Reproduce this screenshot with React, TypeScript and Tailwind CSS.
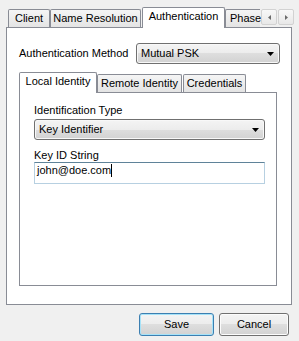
import React from 'react';

const font = "font-['Liberation_Sans',Arial,sans-serif]";

function Tab({ label, selected, className = '' }: { label: string; selected?: boolean; className?: string }) {
  if (selected) {
    return (
      <div
        className={`relative z-10 h-[21px] mb-[-1px] flex justify-center pt-[2px] bg-white border border-b-0 border-[#898c95] rounded-t-[2px] whitespace-nowrap ${className}`}
      >
        {label}
      </div>
    );
  }
  return (
    <div
      className={`h-[18px] flex justify-center pt-[2px] bg-[linear-gradient(#f5f5f5,#e4e4e4)] border border-b-0 border-[#898c95] rounded-t-[2px] whitespace-nowrap ${className}`}
    >
      {label}
    </div>
  );
}

function Combo({ value, className = '' }: { value: string; className?: string }) {
  return (
    <div
      className={`h-[21px] flex items-center justify-between pl-[4px] pr-[5px] rounded-[3px] border border-[#707070] bg-[linear-gradient(#f4f4f4,#ececec_50%,#dedede_50%,#d2d2d2)] shadow-[inset_0_0_0_1px_#f8f8f8] ${className}`}
    >
      <span>{value}</span>
      <svg width="7" height="4" viewBox="0 0 7 4">
        <path d="M0 0h7L3.5 4z" fill="#000" />
      </svg>
    </div>
  );
}

function ScrollArrow({ dir }: { dir: 'left' | 'right' }) {
  return (
    <div className="w-[16px] h-[16px] flex items-center justify-center border border-[#d2d2d2] bg-[linear-gradient(#f8f8f8,#e8e8e8)] rounded-[2px]">
      <svg width="3" height="5" viewBox="0 0 3 5">
        <path d={dir === 'left' ? 'M3 0v5L0 2.5z' : 'M0 0v5L3 2.5z'} fill="#6a6a6a" />
      </svg>
    </div>
  );
}

function Button({ label, primary, className = '' }: { label: string; primary?: boolean; className?: string }) {
  return (
    <div
      className={`h-[23px] flex items-center justify-center rounded-[3px] border bg-[linear-gradient(#f4f4f4,#ececec_50%,#dedede_50%,#d2d2d2)] ${
        primary
          ? 'border-[#3c7fb1] shadow-[inset_0_0_0_1px_#a6e2f8]'
          : 'border-[#707070] shadow-[inset_0_0_0_1px_#fcfcfc]'
      } ${className}`}
    >
      {label}
    </div>
  );
}

export default function App() {
  return (
    <div className={`w-[299px] h-[341px] bg-[#f0f0f0] pt-[7px] pl-[6px] pr-[7px] text-[11px] leading-[13px] text-black ${font}`}>
      {/* Outer tab strip */}
      <div className="flex h-[20px] items-end">
        <div className="flex items-end h-full w-[254px]">
          <Tab label="Client" className="ml-[2px] w-[42px]" />
          <Tab label="Name Resolution" className="w-[91px]" />
          <Tab label="Authentication" selected className="ml-[1px] w-[83px]" />
          <div className="h-[18px] w-[35px] pt-[2px] pl-[4px] bg-[linear-gradient(#f5f5f5,#e4e4e4)] border-t border-l border-[#898c95] rounded-tl-[2px] whitespace-nowrap">
            Phase
          </div>
        </div>
        <div className="flex self-start mt-[2px] ml-[1px] gap-[1px]">
          <ScrollArrow dir="left" />
          <ScrollArrow dir="right" />
        </div>
      </div>

      {/* Outer panel */}
      <div className="h-[278px] border border-[#898c95] bg-white pt-[15px] pl-[12px]">
        <div className="flex items-center">
          <span className="w-[117px]">Authentication Method</span>
          <Combo value="Mutual PSK" className="w-[144px]" />
        </div>

        <div className="mt-[8px] w-[258px]">
          {/* Inner tab strip */}
          <div className="flex h-[20px] items-end">
            <Tab label="Local Identity" selected className="w-[78px]" />
            <Tab label="Remote Identity" className="w-[85px]" />
            <Tab label="Credentials" className="ml-[1px] w-[63px]" />
          </div>

          {/* Inner panel */}
          <div className="h-[194px] border border-[#898c95] bg-white pt-[11px] pl-[14px]">
            <div>Identification Type</div>
            <Combo value="Key Identifier" className="mt-[2px] w-[231px]" />
            <div className="mt-[9px]">Key ID String</div>
            <div className="w-[231px] h-[22px] flex items-start pt-[1px] pl-[2px] bg-white border border-[#b7d0e1] border-t-[#5f8399]">
              <span>john@doe.com</span>
              <span className="w-px h-[13px] bg-black" />
            </div>
          </div>
        </div>
      </div>

      {/* Dialog buttons */}
      <div className="flex justify-end gap-[5px] mt-[8px] pr-[3px]">
        <Button label="Save" primary className="w-[75px]" />
        <Button label="Cancel" className="w-[70px]" />
      </div>
    </div>
  );
}
